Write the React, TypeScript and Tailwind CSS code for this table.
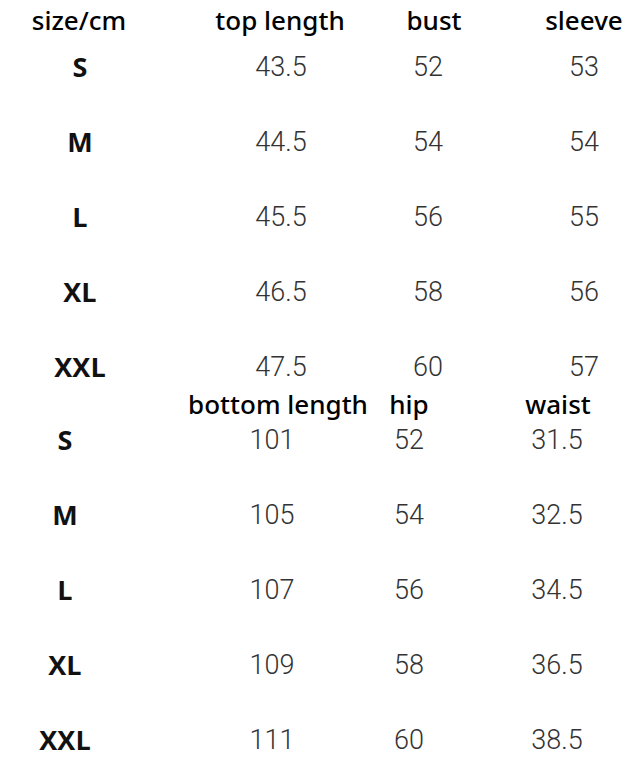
import React from 'react';

const top = [
  ['S', '43.5', '52', '53'],
  ['M', '44.5', '54', '54'],
  ['L', '45.5', '56', '55'],
  ['XL', '46.5', '58', '56'],
  ['XXL', '47.5', '60', '57'],
];

const bottom = [
  ['S', '101', '52', '31.5'],
  ['M', '105', '54', '32.5'],
  ['L', '107', '56', '34.5'],
  ['XL', '109', '58', '36.5'],
  ['XXL', '111', '60', '38.5'],
];

const head = "flex justify-center whitespace-nowrap text-[26px] font-medium text-black font-['Noto_Sans',sans-serif] leading-none";
const label = "flex justify-center text-[27px] font-bold text-[#111] font-['Open_Sans',sans-serif]";
const num = "flex justify-center text-[27px] font-light text-[#333] font-['Roboto',sans-serif]";

export default function App() {
  return (
    <div className="w-[637px] h-[773px] bg-white overflow-hidden">
      {/* top part */}
      <div className="flex items-center h-[40px]">
        <div className={`${head} w-[158px]`}>size/cm</div>
        <div className={`${head} ml-[72px] w-[100px]`}>top length</div>
        <div className={`${head} ml-[73px] w-[62px]`}>bust</div>
        <div className={`${head} ml-[69px] w-[100px]`}>sleeve</div>
      </div>
      <div className="flex flex-col gap-[21px]">
        {top.map((r) => (
          <div key={r[0]} className="flex items-center h-[54px]">
            <div className={`${label} w-[160px]`}>{r[0]}</div>
            <div className={`${num} ml-[71px] w-[100px]`}>{r[1]}</div>
            <div className={`${num} ml-[72px] w-[50px]`}>{r[2]}</div>
            <div className={`${num} ml-[81px] w-[100px]`}>{r[3]}</div>
          </div>
        ))}
      </div>

      {/* bottom part */}
      <div className="flex items-center h-[19px]">
        <div className="w-[130px]" />
        <div className={`${head} ml-[76px] w-[144px]`}>bottom length</div>
        <div className={`${head} ml-[34px] w-[50px]`}>hip</div>
        <div className={`${head} ml-[74px] w-[100px]`}>waist</div>
      </div>
      <div className="flex flex-col gap-[21px]">
        {bottom.map((r) => (
          <div key={r[0]} className="flex items-center h-[54px]">
            <div className={`${label} w-[130px]`}>{r[0]}</div>
            <div className={`${num} ml-[70px] w-[144px]`}>{r[1]}</div>
            <div className={`${num} ml-[40px] w-[50px]`}>{r[2]}</div>
            <div className={`${num} ml-[73px] w-[100px]`}>{r[3]}</div>
          </div>
        ))}
      </div>
    </div>
  );
}
